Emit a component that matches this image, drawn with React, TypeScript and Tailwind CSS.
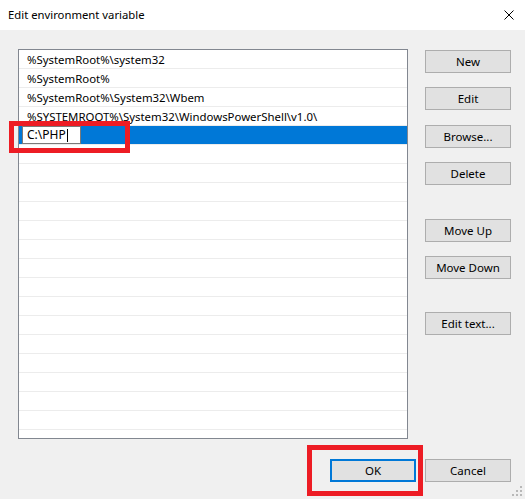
const paths = [
  '%SystemRoot%\\system32',
  '%SystemRoot%',
  '%SystemRoot%\\System32\\Wbem',
  '%SYSTEMROOT%\\System32\\WindowsPowerShell\\v1.0\\',
];

const font = { fontFamily: '"Segoe UI", "Noto Sans", sans-serif' };

const Button = ({
  children,
  focused,
  className,
}: {
  children: string;
  focused?: boolean;
  className?: string;
}) => (
  <button
    className={`h-[23px] w-[86px] bg-[#e1e1e1] text-[11.5px] text-black flex items-center justify-center ${
      focused ? 'border-2 border-[#0078d7]' : 'border border-[#adadad]'
    } ${className ?? ''}`}
  >
    {children}
  </button>
);

export default function App() {
  const empty = Array.from({ length: 15 });
  return (
    <div
      className="relative w-[525px] h-[499px] flex flex-col bg-[#f0f0f0] overflow-hidden"
      style={font}
    >
      <div className="h-[30px] bg-white flex items-center justify-between pl-[8px] pr-[8px] shrink-0">
        <span className="text-[11.3px] text-black">Edit environment variable</span>
        <svg width="10" height="10" viewBox="0 0 10 10" className="mr-[3px]">
          <path d="M0.5 0.5 L9.5 9.5 M9.5 0.5 L0.5 9.5" stroke="#000" strokeWidth="1" />
        </svg>
      </div>

      <div className="flex flex-1 pl-[18px] pt-[19px]">
        <div className="w-[390px] h-[390px] border border-[#828790] bg-white overflow-hidden">
          {paths.map((p) => (
            <div
              key={p}
              className="h-[19px] border-b border-[#ececec] pl-[8px] text-[11.4px] leading-[20px] text-black whitespace-nowrap"
            >
              {p}
            </div>
          ))}
          <div className="h-[19px] border-b border-[#ececec] bg-[#0078d7] pl-[3px]">
            <div className="w-[59px] h-[18px] bg-white border border-[#7a7a7a] pl-[4px] text-[12px] leading-[16px] text-black flex items-center">
              C:\PHP
              <span className="inline-block w-px h-[13px] bg-black ml-px" />
            </div>
          </div>
          {empty.map((_, i) => (
            <div key={i} className="h-[19px] border-b border-[#ececec]" />
          ))}
        </div>

        <div className="flex flex-col ml-[17px] pt-px">
          <Button>New</Button>
          <Button className="mt-[14px]">Edit</Button>
          <Button className="mt-[15px]">Browse...</Button>
          <Button className="mt-[14px]">Delete</Button>
          <Button className="mt-[34px]">Move Up</Button>
          <Button className="mt-[14px]">Move Down</Button>
          <Button className="mt-[33px]">Edit text...</Button>
        </div>
      </div>

      <div className="flex justify-end gap-[9px] pr-[14px] pb-[17px] shrink-0">
        <Button focused>OK</Button>
        <Button>Cancel</Button>
      </div>

      {/* annotation boxes */}
      <div className="absolute left-[9px] top-[121px] w-[121px] h-[32px] border-[5px] border-[#ed1c24]" />
      <div className="absolute left-[307px] top-[445px] w-[116px] h-[51px] border-[5px] border-[#ed1c24]" />

      <svg className="absolute right-[2px] bottom-[2px]" width="11" height="11" viewBox="0 0 11 11">
        {[
          [8, 0],
          [4, 4],
          [8, 4],
          [0, 8],
          [4, 8],
          [8, 8],
        ].map(([x, y]) => (
          <rect key={`${x}-${y}`} x={x} y={y} width="2" height="2" fill="#b8b8b8" />
        ))}
      </svg>
    </div>
  );
}
